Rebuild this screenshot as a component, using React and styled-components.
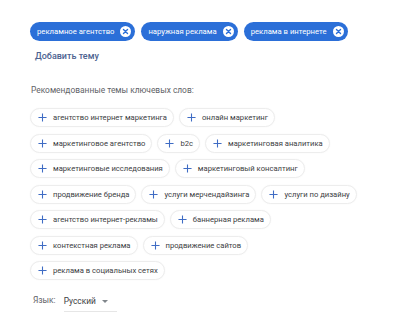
import React from 'react';
import styled, { createGlobalStyle } from 'styled-components';

const GlobalStyle = createGlobalStyle`
  body {
    margin: 0;
    background: #ffffff;
    font-family: Roboto, 'Noto Sans', sans-serif;
  }
`;

const Page = styled.div`
  width: 399px;
  height: 320px;
  padding: 22px 0 0 30px;
  box-sizing: border-box;
  overflow: hidden;
`;

const SelectedRow = styled.div`
  display: flex;
  gap: 6px;
`;

const SelectedChip = styled.div`
  display: flex;
  align-items: center;
  gap: 6px;
  height: 19px;
  padding: 0 4px 0 7px;
  border-radius: 10px;
  background: #2b6fd8;
  color: #ffffff;
  font-size: 7.7px;
  white-space: nowrap;
`;

const CloseIcon = styled.svg`
  width: 11px;
  height: 11px;
  flex: none;
`;

const AddTopic = styled.div`
  margin: 9px 0 0 5px;
  font-size: 9px;
  font-weight: 500;
  color: #4d6290;
  line-height: 12px;
`;

const Heading = styled.div`
  margin: 22px 0 0 1px;
  font-size: 8.4px;
  color: #5f6368;
  line-height: 12px;
`;

const Suggestions = styled.div`
  display: flex;
  flex-direction: column;
  gap: 6.5px;
  margin-top: 12px;
`;

const SuggestRow = styled.div`
  display: flex;
  gap: 5px;
`;

const SuggestChip = styled.div`
  display: flex;
  align-items: center;
  gap: 6px;
  box-sizing: border-box;
  height: 19px;
  padding: 0 6px 0 7px;
  border: 1px solid #ededed;
  border-radius: 10px;
  background: #ffffff;
  box-shadow: 0 0 2px rgba(0, 0, 0, 0.04);
  color: #3c4043;
  font-size: 7.65px;
  white-space: nowrap;
`;

const PlusIcon = styled.svg`
  width: 9px;
  height: 9px;
  flex: none;
`;

const LangRow = styled.div`
  display: flex;
  align-items: center;
  gap: 8px;
  margin: 8px 0 0 3px;
  font-size: 8.4px;
  color: #5f6368;
`;

const LangSelect = styled.div`
  display: flex;
  align-items: center;
  gap: 6px;
  padding: 4px 9px 5px 0;
  border-bottom: 1px solid #e6e6e6;
  margin-top: 4px;
  color: #3c4043;
`;

const Caret = styled.span`
  width: 0;
  height: 0;
  border-left: 3px solid transparent;
  border-right: 3px solid transparent;
  border-top: 3px solid #80868b;
`;

const selected = ['рекламное агентство', 'наружная реклама', 'реклама в интернете'];

const rows = [
  ['агентство интернет маркетинга', 'онлайн маркетинг'],
  ['маркетинговое агентство', 'b2c', 'маркетинговая аналитика'],
  ['маркетинговые исследования', 'маркетинговый консалтинг'],
  ['продвижение бренда', 'услуги мерчендайзинга', 'услуги по дизайну'],
  ['агентство интернет-рекламы', 'баннерная реклама'],
  ['контекстная реклама', 'продвижение сайтов'],
  ['реклама в социальных сетях'],
];

const Close = () => (
  <CloseIcon viewBox="0 0 12 12">
    <circle cx="6" cy="6" r="6" fill="#ffffff" />
    <path d="M3.8 3.8 L8.2 8.2 M8.2 3.8 L3.8 8.2" stroke="#2b6fd8" strokeWidth="1.5" strokeLinecap="round" />
  </CloseIcon>
);

const Plus = () => (
  <PlusIcon viewBox="0 0 10 10">
    <path d="M5 0.5 V9.5 M0.5 5 H9.5" stroke="#3f6cc4" strokeWidth="1.2" />
  </PlusIcon>
);

const App = () => (
  <>
    <GlobalStyle />
    <Page>
      <SelectedRow>
        {selected.map((t) => (
          <SelectedChip key={t}>
            {t}
            <Close />
          </SelectedChip>
        ))}
      </SelectedRow>
      <AddTopic>Добавить тему</AddTopic>
      <Heading>Рекомендованные темы ключевых слов:</Heading>
      <Suggestions>
        {rows.map((row) => (
          <SuggestRow key={row[0]}>
            {row.map((t) => (
              <SuggestChip key={t}>
                <Plus />
                {t}
              </SuggestChip>
            ))}
          </SuggestRow>
        ))}
      </Suggestions>
      <LangRow>
        Язык:
        <LangSelect>
          Русский
          <Caret />
        </LangSelect>
      </LangRow>
    </Page>
  </>
);

export default App;
